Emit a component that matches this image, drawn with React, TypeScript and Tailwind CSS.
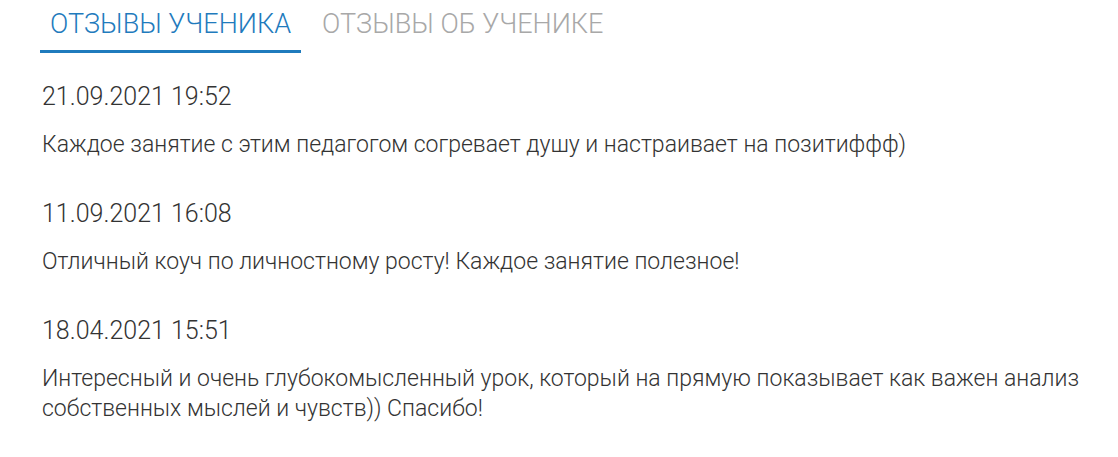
const reviews = [
  { date: "21.09.2021 19:52", text: "Каждое занятие с этим педагогом согревает душу и настраивает на позитиффф)" },
  { date: "11.09.2021 16:08", text: "Отличный коуч по личностному росту! Каждое занятие полезное!" },
  {
    date: "18.04.2021 15:51",
    text: "Интересный и очень глубокомысленный урок, который на прямую показывает как важен анализ собственных мыслей и чувств)) Спасибо!",
  },
];

export default function App() {
  return (
    <div className="w-[1118px] h-[457px] bg-white font-['Roboto',sans-serif] font-light text-[#333]">
      <div className="flex pl-[40px] pt-[6px] gap-[11px]">
        <div className="px-[10px] pb-[8px] border-b-[3px] border-[#1f7bbd] text-[27px] leading-[36px] text-[#1f7bbd]">
          ОТЗЫВЫ УЧЕНИКА
        </div>
        <div className="px-[10px] pb-[8px] text-[27px] leading-[36px] text-[#a8a8a8]">
          ОТЗЫВЫ ОБ УЧЕНИКЕ
        </div>
      </div>
      <div className="pl-[42px] pt-[29px] pr-[20px] flex flex-col gap-[39px]">
        {reviews.map((r) => (
          <div key={r.date} className="flex flex-col gap-[18px]">
            <div className="text-[25px] leading-[30px]">{r.date}</div>
            <div className="text-[23px] leading-[30px]">{r.text}</div>
          </div>
        ))}
      </div>
    </div>
  );
}
